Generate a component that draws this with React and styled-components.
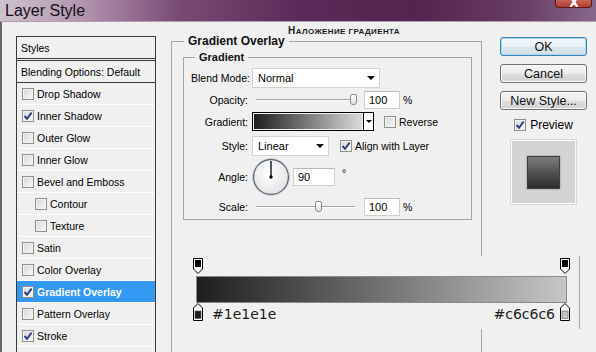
import React from "react";
import styled, { createGlobalStyle } from "styled-components";

const GlobalStyle = createGlobalStyle`
  html, body {
    margin: 0;
    padding: 0;
    background: #f0f0f0;
  }
  body {
    font-family: "Liberation Sans", Arial, sans-serif;
    font-size: 10.5px;
    color: #000;
  }
`;

const Window = styled.div`
  width: 596px;
  height: 352px;
  overflow: hidden;
  background: #f0f0f0;
  display: flex;
  flex-direction: column;
`;

const TitleBar = styled.div`
  position: relative;
  flex: none;
  height: 20px;
  border-bottom: 1px solid #b29cb0;
  background: linear-gradient(
    90deg,
    #cfc2cf 0%,
    #b194ae 14%,
    #7a4a75 30%,
    #5c2a58 50%,
    #55234f 70%,
    #6a3e66 88%,
    #86688a 100%
  );
  display: flex;
  align-items: center;
  padding: 1px 0 0 5px;
  font-size: 16px;
  color: #151015;
`;

const CloseButton = styled.div`
  position: absolute;
  top: 0;
  right: 4px;
  width: 37px;
  height: 8px;
  box-sizing: border-box;
  border: 1px solid #5a1a1a;
  border-top: none;
  border-radius: 0 0 4px 4px;
  background: linear-gradient(#c4645a, #b23c30);
  display: flex;
  justify-content: center;
`;

const Body = styled.div`
  flex: 1;
  display: flex;
  border-left: 2px solid #6f5f6f;
  min-height: 0;
`;

/* ---------- left list ---------- */

const StylesPanel = styled.div`
  flex: none;
  width: 140px;
  margin: 14px 0 0 14px;
  border: 1px solid #3a3a3a;
  border-bottom: none;
  box-sizing: border-box;
`;

const PanelHead = styled.div`
  height: 21px;
  display: flex;
  align-items: center;
  padding-left: 4px;
  border-bottom: ${(p) => (p.$double ? "3px double #3a3a3a" : "1px solid #3a3a3a")};
`;

const EffectRow = styled.div`
  height: 21px;
  border-bottom: 1px solid #fdfdfd;
  display: flex;
  align-items: center;
  gap: 3px;
  padding-left: ${(p) => (p.$sub ? 18 : 5)}px;
  background: ${(p) => (p.$active ? "#3399f3" : "transparent")};
  color: ${(p) => (p.$active ? "#fff" : "#000")};
  font-weight: ${(p) => (p.$active ? "bold" : "normal")};
`;

const Box = styled.span`
  flex: none;
  width: 12px;
  height: 12px;
  box-sizing: border-box;
  border: 1px solid #8e8f8f;
  background: linear-gradient(135deg, #d6d6d6, #f8f8f8);
  box-shadow: inset 0 0 0 1px #f2f2f2;
  display: inline-flex;
  align-items: center;
  justify-content: center;
`;

const Checkbox = ({ checked }) => (
  <Box>
    {checked && (
      <svg width="10" height="10" viewBox="0 0 10 10">
        <path d="M1.5 5 L4 7.8 L8.6 1.6" fill="none" stroke="#2c3d86" strokeWidth="1.9" />
      </svg>
    )}
  </Box>
);

/* ---------- main column ---------- */

const MainCol = styled.div`
  flex: none;
  width: 311px;
  margin-left: 15px;
`;

const Heading = styled.div`
  margin-top: 4px;
  height: 10px;
  line-height: 10px;
  padding-left: 117px;
  font-size: 8px;
  font-weight: bold;
  text-transform: uppercase;
  letter-spacing: 0.4px;
  color: #1a1a1a;
  &::first-letter {
    font-size: 10px;
  }
`;

const Group = styled.fieldset`
  margin: ${(p) => p.$top || 0}px 0 0 0;
  min-width: 0;
  border: 1px solid #a4a4a4;
  border-bottom: ${(p) => (p.$open ? "none" : "1px solid #a4a4a4")};
  padding: ${(p) => p.$pad};
  height: ${(p) => (p.$open ? "330px" : "auto")};
  box-sizing: border-box;
`;

const Legend = styled.legend`
  padding: 0 4px;
  margin-left: ${(p) => p.$indent}px;
  line-height: 10px;
  font-size: ${(p) => p.$size}px;
  font-weight: bold;
  color: #111;
`;

const Field = styled.div`
  height: ${(p) => p.$h}px;
  display: flex;
  align-items: center;
`;

const Label = styled.span`
  flex: none;
  width: 57px;
  margin-right: 4px;
  text-align: right;
  white-space: nowrap;
`;

const Select = styled.div`
  flex: none;
  width: ${(p) => p.$w}px;
  height: 20px;
  box-sizing: border-box;
  border: 1px solid #d2d2d2;
  background: #fff;
  display: flex;
  align-items: center;
  justify-content: space-between;
  padding: 0 4px 0 5px;
  font-size: 11px;
`;

const Arrow = styled.span`
  width: 0;
  height: 0;
  border-left: ${(p) => p.$s}px solid transparent;
  border-right: ${(p) => p.$s}px solid transparent;
  border-top: ${(p) => p.$s}px solid #000;
`;

const Slider = styled.div`
  position: relative;
  flex: none;
  width: 106px;
  height: 14px;
  &::before {
    content: "";
    position: absolute;
    left: 4px;
    right: 3px;
    top: 6px;
    border-top: 1px solid #a6a6a6;
    border-bottom: 1px solid #ffffff;
  }
`;

const Thumb = styled.div`
  position: absolute;
  top: 1px;
  width: 7px;
  height: 11px;
  margin-left: -4px;
  box-sizing: border-box;
  border: 1px solid #8a8a8a;
  border-radius: 2px 2px 3px 3px;
  background: linear-gradient(#ffffff, #dedede);
`;

const NumInput = styled.div`
  flex: none;
  width: ${(p) => p.$w}px;
  height: 18px;
  margin-left: ${(p) => p.$ml}px;
  box-sizing: border-box;
  border: 1px solid #cfcfcf;
  border-top-color: #b9b9b9;
  background: #fff;
  padding-left: 4px;
  display: flex;
  align-items: center;
  font-size: 11px;
`;

const Unit = styled.span`
  margin-left: ${(p) => p.$ml || 3}px;
  align-self: ${(p) => (p.$raised ? "flex-start" : "center")};
  margin-top: ${(p) => (p.$raised ? 7 : 0)}px;
`;

const GradientSwatch = styled.div`
  flex: none;
  width: 122px;
  height: 19px;
  box-sizing: border-box;
  border: 1px solid #000;
  display: flex;
`;

const SwatchFill = styled.div`
  flex: 1;
  margin: 1px;
  background: linear-gradient(90deg, #1e1e1e, #dadada);
`;

const SwatchDrop = styled.div`
  width: 9px;
  border-left: 1px solid #000;
  background: #fff;
  display: flex;
  align-items: center;
  justify-content: center;
`;

const CheckLabel = styled.label`
  display: flex;
  align-items: center;
  gap: 3px;
  margin-left: ${(p) => p.$ml}px;
`;

/* ---------- gradient editor ---------- */

const Editor = styled.div`
  margin: 36px -108px 0 0;
  height: 73px;
  box-sizing: border-box;
  padding: 2px 0 0 10px;
  border-right: 1px solid #a8a8a8;
  background: #f0f0f0;
`;

const StopRow = styled.div`
  width: 377px;
  height: ${(p) => p.$h}px;
  display: flex;
  align-items: flex-start;
  justify-content: space-between;
`;

const Bar = styled.div`
  margin: 2px 0 0 3px;
  width: 371px;
  height: 27px;
  box-sizing: border-box;
  border: 1px solid #8a8a8a;
  background: linear-gradient(90deg, #1e1e1e, #c6c6c6);
`;

const StopLabel = styled.span`
  font-family: "DejaVu Sans", sans-serif;
  font-size: 14px;
  line-height: 20px;
  color: #1c1c1c;
  margin: 1px ${(p) => p.$mr || 0}px 0 ${(p) => p.$ml || 0}px;
`;

const Spacer = styled.div`
  flex: 1;
`;

const TopStop = () => (
  <svg width="10" height="17" viewBox="0 0 10 17">
    <path d="M0.5 0.5 H9.5 V11 L5 15.5 L0.5 11 Z" fill="#fff" stroke="#000" />
    <rect x="2" y="2" width="6" height="7" fill="#000" />
  </svg>
);

const BottomStop = ({ color }) => (
  <svg width="10" height="18" viewBox="0 0 10 18">
    <path d="M5 0.5 L9.5 5 V17.5 H0.5 V5 Z" fill="#fff" stroke="#000" />
    <rect x="2" y="8" width="6" height="7.5" fill={color} stroke="#555" strokeWidth="0.6" />
  </svg>
);

/* ---------- right column ---------- */

const RightCol = styled.div`
  flex: none;
  width: 87px;
  margin-left: 18px;
  padding-top: 15px;
  display: flex;
  flex-direction: column;
  align-items: center;
`;

const Button = styled.div`
  width: 87px;
  height: 19px;
  margin-bottom: 8px;
  box-sizing: border-box;
  border: 1px solid ${(p) => (p.$primary ? "#3c7fb1" : "#707070")};
  border-radius: 3px;
  background: ${(p) =>
    p.$primary
      ? "linear-gradient(#f2f7fa 0%, #e8f0f4 50%, #dbe6ec 51%, #d2dfe6 100%)"
      : "linear-gradient(#f6f6f6 0%, #ececec 50%, #dedede 51%, #d2d2d2 100%)"};
  box-shadow: ${(p) => (p.$primary ? "inset 0 0 0 1px #a6dcf2" : "inset 0 0 0 1px #fbfbfb")};
  display: flex;
  align-items: center;
  justify-content: center;
  font-size: 12.5px;
  color: #111;
`;

const PreviewToggle = styled.label`
  height: 14px;
  display: flex;
  align-items: center;
  gap: 4px;
  font-size: 12px;
`;

const PreviewBox = styled.div`
  margin-top: 8px;
  width: 65px;
  height: 64px;
  box-sizing: border-box;
  border: 1px solid #f9f9f9;
  box-shadow: 0 0 0 1px #d8d8d8;
  background: #d4d4d4;
  display: flex;
  align-items: center;
  justify-content: center;
`;

const PreviewSquare = styled.div`
  width: 33px;
  height: 33px;
  box-sizing: border-box;
  border: 1px solid #3e3e3e;
  background: linear-gradient(#7c7c7c, #4a4a4a 60%, #2c2c2c);
  box-shadow: 0 0 2px rgba(0, 0, 0, 0.35);
`;

const effects = [
  { name: "Drop Shadow" },
  { name: "Inner Shadow", on: true },
  { name: "Outer Glow" },
  { name: "Inner Glow" },
  { name: "Bevel and Emboss" },
  { name: "Contour", sub: true },
  { name: "Texture", sub: true },
  { name: "Satin" },
  { name: "Color Overlay" },
  { name: "Gradient Overlay", on: true, active: true },
  { name: "Pattern Overlay" },
  { name: "Stroke", on: true },
];

// thumb offset inside the 106px slider, track runs 4..102
const thumbLeft = (value, min, max) => 4 + ((value - min) / (max - min)) * 98;

export default function App() {
  return (
    <Window>
      <GlobalStyle />
      <TitleBar>
        Layer Style
        <CloseButton>
          <svg width="14" height="7" viewBox="0 0 14 7">
            <path d="M4 -2 L7 2 L10 -2 M7 2 L3.5 7 M7 2 L10.5 7" stroke="#fff" strokeWidth="2.2" fill="none" />
          </svg>
        </CloseButton>
      </TitleBar>

      <Body>
        <StylesPanel>
          <PanelHead $double>Styles</PanelHead>
          <PanelHead>Blending Options: Default</PanelHead>
          {effects.map((e) => (
            <EffectRow key={e.name} $sub={e.sub} $active={e.active}>
              <Checkbox checked={e.on} />
              {e.name}
            </EffectRow>
          ))}
        </StylesPanel>

        <MainCol>
          <Heading>Наложение градиента</Heading>
          <Group $open $pad="0 9px 0 11px">
            <Legend $indent={1} $size={12}>Gradient Overlay</Legend>
            <Group $top={6} $pad="5px 0 0 7px">
              <Legend $indent={4} $size={11}>Gradient</Legend>
              <Field $h={22}>
                <Label>Blend Mode:</Label>
                <Select $w={128}>
                  Normal
                  <Arrow $s={4} />
                </Select>
              </Field>
              <Field $h={22}>
                <Label>Opacity:</Label>
                <Slider>
                  <Thumb style={{ left: thumbLeft(100, 0, 100) }} />
                </Slider>
                <NumInput $w={36} $ml={6}>100</NumInput>
                <Unit>%</Unit>
              </Field>
              <Field $h={21}>
                <Label>Gradient:</Label>
                <GradientSwatch>
                  <SwatchFill />
                  <SwatchDrop>
                    <Arrow $s={3} />
                  </SwatchDrop>
                </GradientSwatch>
                <CheckLabel $ml={10}>
                  <Checkbox />
                  Reverse
                </CheckLabel>
              </Field>
              <Field $h={28}>
                <Label>Style:</Label>
                <Select $w={77}>
                  Linear
                  <Arrow $s={4} />
                </Select>
                <CheckLabel $ml={11}>
                  <Checkbox checked />
                  Align with Layer
                </CheckLabel>
              </Field>
              <Field $h={34}>
                <Label>Angle:</Label>
                <svg width="38" height="38" viewBox="0 0 38 38">
                  <defs>
                    <radialGradient id="dial" cx="0.45" cy="0.4" r="0.6">
                      <stop offset="0" stopColor="#ffffff" />
                      <stop offset="1" stopColor="#e4e4e4" />
                    </radialGradient>
                  </defs>
                  <circle cx="19" cy="19" r="17.5" fill="url(#dial)" stroke="#5b6378" strokeWidth="1.4" />
                  <circle cx="19" cy="19" r="18.5" fill="none" stroke="#c9ccd4" strokeWidth="0.8" />
                  <line x1="19" y1="19" x2="19" y2="3" stroke="#000" strokeWidth="1.3" />
                  <circle cx="19" cy="19" r="1.7" fill="#000" />
                </svg>
                <NumInput $w={42} $ml={3}>90</NumInput>
                <Unit $ml={7} $raised>°</Unit>
              </Field>
              <Field $h={25}>
                <Label>Scale:</Label>
                <Slider>
                  <Thumb style={{ left: thumbLeft(100, 10, 150) }} />
                </Slider>
                <NumInput $w={36} $ml={6}>100</NumInput>
                <Unit>%</Unit>
              </Field>
            </Group>

            <Editor>
              <StopRow $h={16}>
                <TopStop />
                <TopStop />
              </StopRow>
              <Bar />
              <StopRow $h={18}>
                <BottomStop color="#1e1e1e" />
                <StopLabel $ml={9}>#1e1e1e</StopLabel>
                <Spacer />
                <StopLabel $mr={5}>#c6c6c6</StopLabel>
                <BottomStop color="#c6c6c6" />
              </StopRow>
            </Editor>
          </Group>
        </MainCol>

        <RightCol>
          <Button $primary>OK</Button>
          <Button>Cancel</Button>
          <Button>New Style...</Button>
          <PreviewToggle>
            <Checkbox checked />
            Preview
          </PreviewToggle>
          <PreviewBox>
            <PreviewSquare />
          </PreviewBox>
        </RightCol>
      </Body>
    </Window>
  );
}
